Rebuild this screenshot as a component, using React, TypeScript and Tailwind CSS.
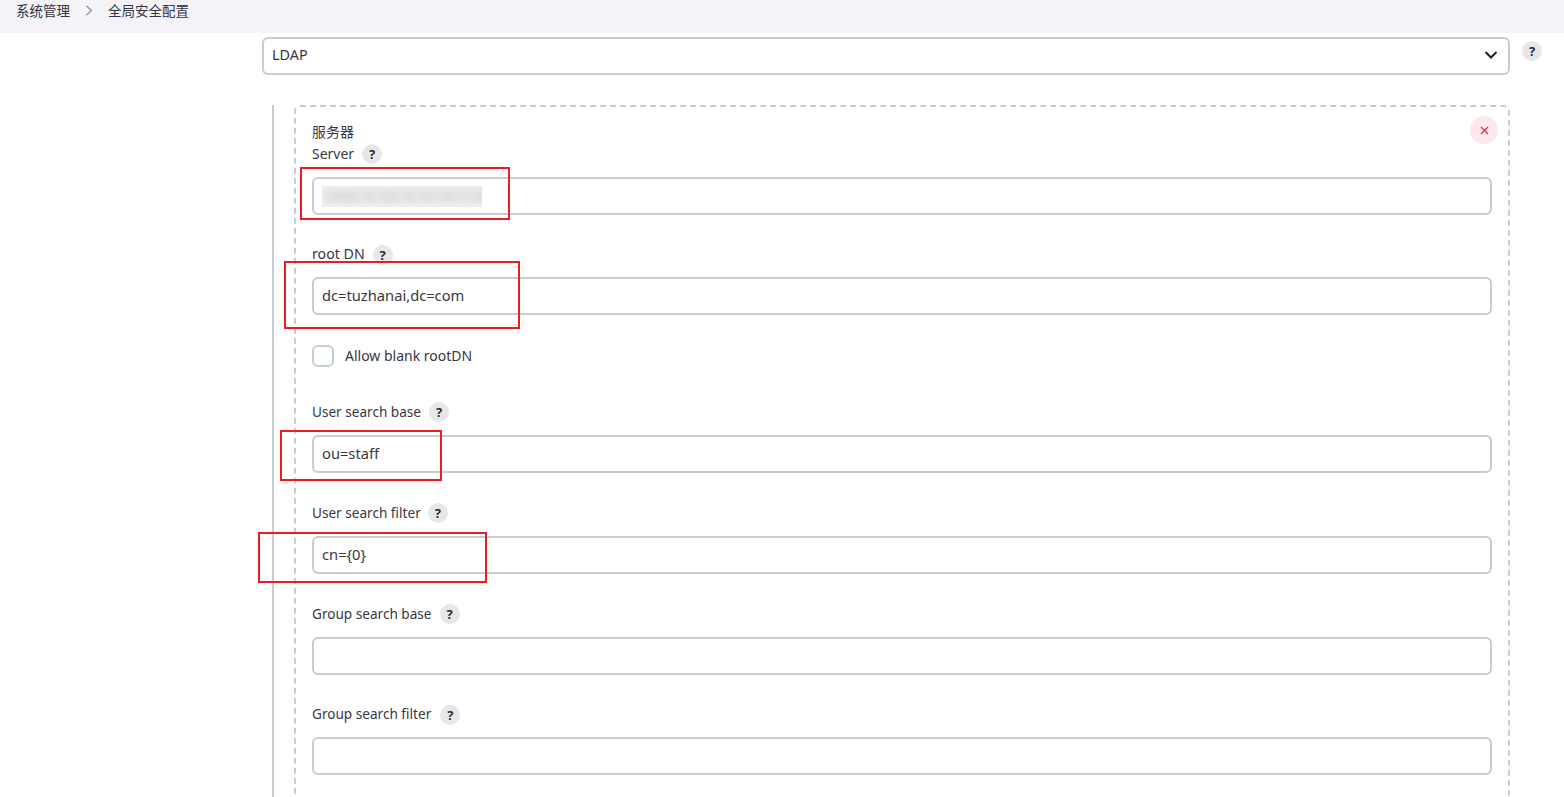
import React from "react";

const Help = ({ className = "" }: { className?: string }) => (
  <span className={"inline-flex h-5 w-5 shrink-0 items-center justify-center rounded-full bg-[#e7e7e9] text-[13px] font-bold leading-none text-[#2a2a35] " + className}>?</span>
);

const Label = ({ text, size = "text-[13.6px]", helpClass = "ml-2" }: { text: string; size?: string; helpClass?: string }) => (
  <div className={"flex h-5 items-center leading-5 text-[#383842] " + size}>
    <span>{text}</span>
    <Help className={helpClass} />
  </div>
);

const Input = ({ value = "", children }: { value?: string; children?: React.ReactNode }) => (
  <div className="relative flex h-[38px] items-center rounded-md border-2 border-[#c3ced2] bg-white pb-[2px] pl-2 text-[14.7px] text-[#383842]">
    {value}
    {children}
  </div>
);

const RedBox = ({ className }: { className: string }) => (
  <div className={"pointer-events-none absolute border-2 border-[#ed1c24] " + className} />
);

const blurBlobs = [34, 14, 22, 14, 18, 20, 10, 22];

export default function App() {
  return (
    <div className="relative h-[797px] w-[1564px] overflow-hidden bg-white font-['Noto_Sans','Noto_Sans_CJK_SC',sans-serif] text-[#383842]">
      <header className="flex h-[33px] items-start bg-[#f3f3f8] pl-4 pt-[2px] text-[13.5px] leading-[17px] text-[#333340]">
        <span className="font-['Noto_Sans_CJK_SC',sans-serif]">系统管理</span>
        <svg className="ml-[15px] mt-[3px] h-[11px] w-[8px]" viewBox="0 0 8 11" fill="none" stroke="#8a8a92" strokeWidth="1.1">
          <path d="M1.5 1l5 4.5-5 4.5" />
        </svg>
        <span className="ml-[15px] font-['Noto_Sans_CJK_SC',sans-serif]">全局安全配置</span>
      </header>

      <main className="pl-[262px] pt-1">
        <div className="flex items-start">
          <div className="flex h-[38px] w-[1248px] items-center justify-between rounded-md border-2 border-[#c3ced2] bg-white pl-2 pr-[10px] text-[14.4px] text-[#383842]">
            <span className="-translate-y-[1px]">LDAP</span>
            <svg className="h-[10px] w-[14px] -translate-y-[1px]" viewBox="0 0 14 10" fill="none" stroke="#20202a" strokeWidth="2">
              <path d="M1.5 2l5.500 5.500L12.500 2" />
            </svg>
          </div>
          <Help className="ml-3 mt-1" />
        </div>

        <div className="mt-[30px] ml-[10px] border-l-2 border-[#c3ced2] pl-5">
          <section className="relative w-[1216px] rounded-t-md border-2 border-b-0 border-dashed border-[#c3ced2] px-4 pt-[15px] pb-10">
            <button className="absolute right-[10px] top-[9px] flex h-7 w-7 items-center justify-center rounded-full bg-[#fde8ec]">
              <svg className="h-[9px] w-[9px]" viewBox="0 0 9 9" fill="none" stroke="#ee2b50" strokeWidth="1.3">
                <path d="M1 1l7 7M8 1l-7 7" />
              </svg>
            </button>

            <div className="flex h-5 items-center font-['Noto_Sans_CJK_SC',sans-serif] text-[14px] leading-5 -translate-y-[1px]">服务器</div>
            <div className="mt-[2px]"><Label text="Server" size="text-[14px]" /></div>
            <div className="mt-[13px]">
              <Input>
                <div aria-hidden="true" className="flex h-[21px] w-[160px] translate-y-[1px] items-center gap-[2px] overflow-hidden bg-[#f0f0f0] px-1">
                  {blurBlobs.map((w, i) => (
                    <span key={i} style={{ width: w }} className="h-[12px] shrink-0 bg-[#dcdcdc] blur-[4px]" />
                  ))}
                </div>
              </Input>
            </div>

            <div className="mt-[29px]"><Label text="root DN" size="text-[14.2px]" helpClass="ml-2 mt-[2px]" /></div>
            <div className="mt-[13px]"><Input value="dc=tuzhanai,dc=com" /></div>

            <label className="mt-[30px] flex h-[22px] items-center text-[14px]">
              <span className="h-[22px] w-[22px] rounded-md border-2 border-[#c3ced2] bg-white" />
              <span className="ml-[11px] -translate-y-[1px]">Allow blank rootDN</span>
            </label>

            <div className="mt-[35px]"><Label text="User search base" /></div>
            <div className="mt-[13px]"><Input value="ou=staff" /></div>

            <div className="mt-[30px]"><Label text="User search filter" helpClass="ml-[7px]" /></div>
            <div className="mt-[13px]"><Input value="cn={0}" /></div>

            <div className="mt-[30px]"><Label text="Group search base" /></div>
            <div className="mt-[13px]"><Input /></div>

            <div className="mt-[29px]"><Label text="Group search filter" helpClass="ml-[9px] mt-[2px]" /></div>
            <div className="mt-[13px]"><Input /></div>
          </section>
        </div>
      </main>

      <RedBox className="left-[300px] top-[167px] h-[53px] w-[210px]" />
      <RedBox className="left-[284px] top-[261px] h-[68px] w-[236px]" />
      <RedBox className="left-[280px] top-[430px] h-[51px] w-[162px]" />
      <RedBox className="left-[258px] top-[532px] h-[51px] w-[229px]" />
    </div>
  );
}
